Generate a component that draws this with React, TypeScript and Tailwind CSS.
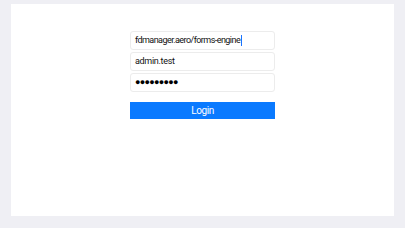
export default function App() {
  return (
    <div className="h-[228px] w-[405px] bg-[#efeff4] px-[11px] pt-[4px] pb-[12px] font-['Roboto',Arial,sans-serif]">
      <div className="flex h-full flex-col items-center bg-white pt-[27px]">
        <div className="flex w-[145px] flex-col gap-[2px]">
          <div className="flex h-[19px] items-center whitespace-nowrap rounded-[3px] border border-[#ececec] px-[4px] text-[9px] tracking-[-0.55px] text-[#111]">
            fdmanager.aero/forms-engine
            <span className="ml-[1px] inline-block h-[11px] w-[1px] bg-[#1a73ff]" />
          </div>
          <div className="flex h-[19px] items-center rounded-[3px] border border-[#ececec] px-[4px] text-[9px] tracking-[-0.3px] text-[#111]">
            admin.test
          </div>
          <div className="flex h-[19px] items-center rounded-[3px] border border-[#ececec] px-[4px] font-['Liberation_Sans',Arial,sans-serif] text-[9px] tracking-[-0.7px] text-black">
            ●●●●●●●●●
          </div>
          <button className="mt-[8px] h-[17px] w-full bg-[#0a7aff] text-[10px] tracking-[-0.4px] text-white">
            Login
          </button>
        </div>
      </div>
    </div>
  );
}
